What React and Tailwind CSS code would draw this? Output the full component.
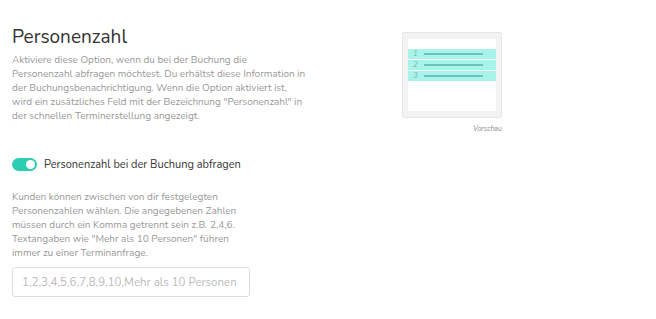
import React, { useState } from "react";

const PreviewBox = () => {
  return (
    <div className="flex flex-col items-end">
      <div className="w-[100px] h-[86px] bg-[#f3f3f3] border border-[#e6e6e6] rounded-[2px] px-[5px] pt-[6px] pb-[6px]">
        <div className="h-full bg-white pt-[10px] flex flex-col gap-[1px]">
          {[1, 2, 3].map((n) => (
            <div key={n} className="h-[10px] bg-[#a8f3ea] flex items-center pl-[5px]">
              <span className="text-[8px] leading-none italic text-[#7fb3ab] w-[11px]">{n}</span>
              <div className="h-[2px] w-[59px] bg-[#6cc4b9]" />
            </div>
          ))}
        </div>
      </div>
      <span className="mt-[6px] text-[7px] italic text-[#8a8a8a]">Vorschau</span>
    </div>
  );
};

const App = () => {
  const [enabled, setEnabled] = useState(true);

  return (
    <div className="min-h-screen bg-white px-[12px] pt-[25px] font-['Nunito','Lato',sans-serif]">
      <div className="flex">
        <div className="w-[296px] mr-[94px]">
          <h1 className="text-[19px] leading-[24px] text-[#333]">Personenzahl</h1>
          <p className="mt-[4px] text-[10px] leading-[14px] text-[#999]">
            Aktiviere diese Option, wenn du bei der Buchung die Personenzahl abfragen möchtest. Du
            erhältst diese Information in der Buchungsbenachrichtigung. Wenn die Option aktiviert
            ist, wird ein zusätzliches Feld mit der Bezeichnung "Personenzahl" in der schnellen
            Terminerstellung angezeigt.
          </p>
        </div>
        <div className="pt-[7px]">
          <PreviewBox />
        </div>
      </div>

      <label className="mt-[22px] flex items-center gap-[7px] cursor-pointer">
        <button
          type="button"
          onClick={() => setEnabled(!enabled)}
          className={`relative w-[25px] h-[13px] rounded-full ${enabled ? "bg-[#2dcdb2]" : "bg-[#ccc]"}`}
        >
          <span
            className={`absolute top-[2px] w-[9px] h-[9px] rounded-full bg-white ${enabled ? "left-[14px]" : "left-[2px]"}`}
          />
        </button>
        <span className="text-[11px] text-[#333]">Personenzahl bei der Buchung abfragen</span>
      </label>

      <p className="mt-[17px] w-[240px] text-[10px] leading-[14px] text-[#999]">
        Kunden können zwischen von dir festgelegten Personenzahlen wählen. Die angegebenen Zahlen
        müssen durch ein Komma getrennt sein z.B. 2,4,6. Textangaben wie "Mehr als 10 Personen"
        führen immer zu einer Terminanfrage.
      </p>

      <input
        type="text"
        placeholder="1,2,3,4,5,6,7,8,9,10,Mehr als 10 Personen"
        className="mt-[7px] w-[238px] h-[30px] px-[9px] border border-[#ddd] rounded-[3px] text-[11.5px] text-[#333] placeholder:text-[#bbb] outline-none"
      />
    </div>
  );
};

export default App;
